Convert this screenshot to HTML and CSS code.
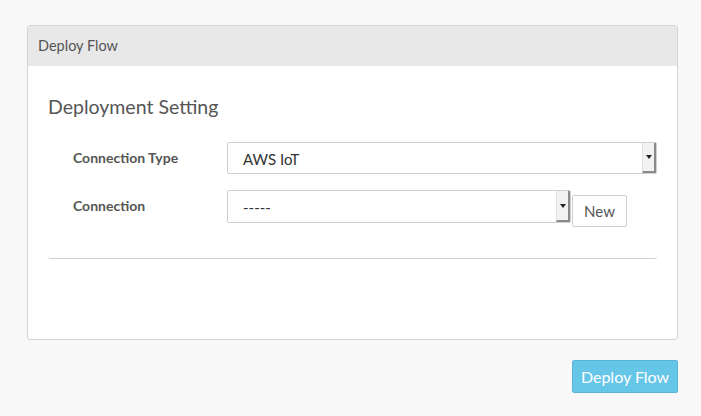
FILE: index.html
```html
<!DOCTYPE html>
<html>
<head>
<meta charset="utf-8">
<link rel="stylesheet" href="styles.css">
</head>
<body>
<div class="page">
  <div class="panel">
    <div class="panel-head">Deploy Flow</div>
    <div class="panel-body">
      <fieldset class="setting">
        <h2 class="legend">Deployment Setting</h2>
        <div class="row row-type">
          <label class="label">Connection Type</label>
          <div class="select select-wide">
            <span class="select-text">AWS IoT</span>
            <span class="select-btn"><span class="caret"></span></span>
          </div>
        </div>
        <div class="row row-conn">
          <label class="label">Connection</label>
          <div class="select select-narrow">
            <span class="select-text">-----</span>
            <span class="select-btn"><span class="caret"></span></span>
          </div>
          <button class="btn-new">New</button>
        </div>
      </fieldset>
    </div>
  </div>
  <div class="actions">
    <button class="btn-deploy">Deploy Flow</button>
  </div>
</div>
</body>
</html>
```
FILE: styles.css
```css
* { box-sizing: border-box; }
html, body { margin: 0; padding: 0; }
body {
  background: #f8f8f8;
  font-family: "Lato", "Open Sans", "Liberation Sans", sans-serif;
  color: #555;
  width: 701px;
  height: 416px;
  overflow: hidden;
}
.page { padding: 25px 23px 0 27px; }
.panel {
  background: #fff;
  border: 1px solid #d4d4d4;
  border-radius: 3px;
  height: 315px;
  overflow: hidden;
}
.panel-head {
  background: #e8e8e8;
  height: 40px;
  padding: 0 10px;
  font-size: 14.5px;
  line-height: 40px;
  color: #555;
}
.panel-body { padding: 0 20px; }
.setting {
  margin: 0;
  padding: 0;
  border: 0;
  border-bottom: 1px solid #d0d0d0;
  border-radius: 0 0 3px 3px;
  height: 193px;
}
.legend {
  margin: 0;
  padding-top: 28px;
  font-weight: 400;
  font-size: 19.5px;
  line-height: 26px;
  color: #555;
}
.row { display: flex; align-items: flex-start; }
.row-type { margin-top: 22px; }
.row-conn { margin-top: 16px; }
.label {
  width: 179px;
  flex-shrink: 0;
  padding-left: 25px;
  font-weight: 700;
  font-size: 14px;
  line-height: 32px;
  color: #555;
}
.select {
  display: flex;
  align-items: stretch;
  height: 32px;
  border: 1px solid #cfcfcf;
  border-radius: 2px;
  background: #fff;
}
.select-wide { width: 430px; }
.select-narrow { width: 344px; height: 33px; }
.select-text {
  flex: 1;
  padding-left: 15px;
  padding-top: 1px;
  font-size: 15px;
  line-height: 31px;
  color: #333;
}
.select-btn {
  width: 14px;
  background: #f2f2f2;
  border-left: 1px solid #e2e2e2;
  border-right: 2px solid #8a8a8a;
  border-bottom: 2px solid #8a8a8a;
  display: flex;
  align-items: center;
  justify-content: center;
}
.caret {
  width: 0; height: 0;
  border-left: 3px solid transparent;
  border-right: 3px solid transparent;
  border-top: 4px solid #222;
}
.btn-new {
  margin-left: 1px;
  margin-top: 5px;
  width: 55px;
  height: 32px;
  background: #fff;
  border: 1px solid #cfcfcf;
  border-radius: 2px;
  font-family: inherit;
  font-size: 15px;
  color: #555;
  padding: 0;
}
.actions {
  display: flex;
  justify-content: flex-end;
  margin-top: 20px;
}
.btn-deploy {
  width: 106px;
  height: 33px;
  background: #66c6e8;
  border: 1px solid #5ab3d8;
  border-radius: 2px;
  color: #fff;
  font-family: inherit;
  font-size: 16px;
  padding: 0;
}
```
